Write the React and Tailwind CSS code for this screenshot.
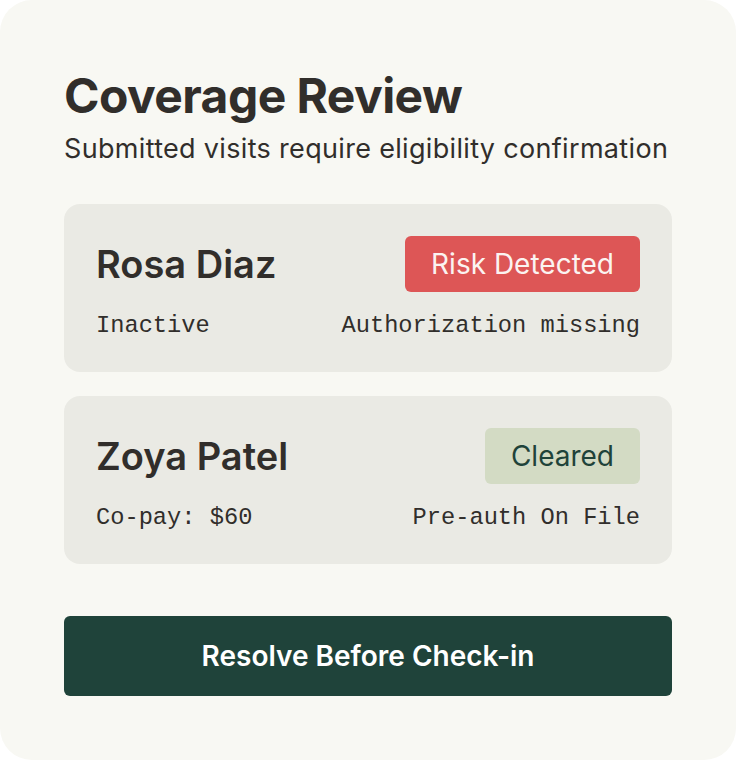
import React from 'react';

const patients = [
    {
        name: 'Rosa Diaz',
        status: 'Risk Detected',
        tone: 'risk',
        left: 'Inactive',
        right: 'Authorization missing',
    },
    {
        name: 'Zoya Patel',
        status: 'Cleared',
        tone: 'ok',
        left: 'Co-pay: $60',
        right: 'Pre-auth On File',
    },
];

function PatientCard({ patient }) {
    const badge = patient.tone === 'risk'
        ? 'bg-[#dd5656] text-[#fbf3f1]'
        : 'bg-[#d3dbc4] text-[#1f433a]';

    return (
        <div className="bg-[#eaeae4] rounded-[16px] px-8 pt-8 pb-[30px]">
            <div className="flex items-center justify-between h-14">
                <h3 className="text-[38px] font-semibold text-[#312e2b] leading-none">
                    {patient.name}
                </h3>
                <span className={`h-14 px-[26px] flex items-center rounded-[6px] text-[28px] leading-none ${badge}`}>
                    {patient.status}
                </span>
            </div>
            <div className="mt-[18px] h-8 flex items-center justify-between font-['Liberation_Mono',monospace] text-[23.7px] text-[#312e2b]">
                <span>{patient.left}</span>
                <span>{patient.right}</span>
            </div>
        </div>
    );
}

export default function App() {
    return (
        <div className="min-h-screen bg-white font-['Inter',sans-serif]">
            <div className="w-[736px] h-[760px] rounded-[32px] bg-[#f8f8f3] px-16 pt-[68px]">
                <h1 className="text-[48px] leading-[56px] font-bold tracking-[-0.012em] text-[#312e2b]">
                    Coverage Review
                </h1>
                <p className="mt-[8px] text-[27px] leading-[34px] tracking-[0.012em] text-[#312e2b]">
                    Submitted visits require eligibility confirmation
                </p>

                <div className="mt-[38px] flex flex-col gap-6">
                    {patients.map(p => (
                        <PatientCard key={p.name} patient={p} />
                    ))}
                </div>

                <button className="mt-[52px] w-full h-20 rounded-[6px] bg-[#1f433a] text-white text-[28px] font-semibold">
                    Resolve Before Check-in
                </button>
            </div>
        </div>
    );
}
